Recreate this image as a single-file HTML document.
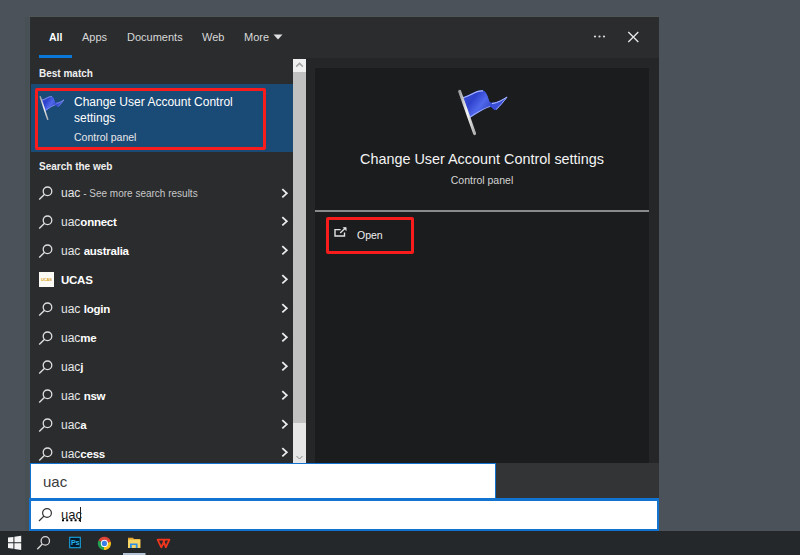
<!DOCTYPE html>
<html><head><meta charset="utf-8">
<style>
html,body{margin:0;padding:0;}
body{width:800px;height:555px;position:relative;overflow:hidden;background:#4b525a;font-family:"Liberation Sans",sans-serif;}
.a{position:absolute;}
#panel{left:30px;top:17px;width:629px;height:446px;background:#2a2c2e;}
#rcol{left:305px;top:58px;width:354px;height:405px;background:#242628;}
#rpane{left:315px;top:68px;width:334px;height:395px;background:#1b1c1e;}
.tab{top:31px;font-size:11px;color:#d8d8d8;white-space:nowrap;}
#uline{left:39px;top:55px;width:33px;height:3px;background:#0a78d8;}
.hdr{font-size:10px;font-weight:bold;color:#f0f0f0;white-space:nowrap;}
#hl{left:31px;top:84px;width:262px;height:68px;background:#1a4a76;}
.redbox{border:3px solid #f81c1c;box-sizing:border-box;border-radius:2px;}
.t{color:#fff;white-space:nowrap;}
.row{left:30px;width:263px;height:29px;}
.row .txt{position:absolute;left:31px;top:7px;font-size:13px;color:#e6e6e6;white-space:nowrap;}
.row .txt b{color:#fff;}
.row svg{position:absolute;}
#sb{left:293px;top:59px;width:13px;height:404px;background:#e6e6e6;}
#thumb{left:293px;top:72px;width:13px;height:351px;background:#c1c1c1;}
#tb{left:0;top:531px;width:800px;height:24px;background:#25282a;}
.row .ic{left:8px;top:8px;}
.row .chev{left:251px;top:9.5px;}
.row .txt{top:9px;font-size:12px;line-height:12px;}
.row .txt b{font-size:11.5px;letter-spacing:-0.25px;}
.sm{font-size:10px;color:#c8c8c8;}
.ucas{position:absolute;left:9px;top:7px;width:15px;height:15px;background:#fbfaf5;}
.ucas span{position:absolute;left:2px;top:5px;font-size:4px;line-height:5px;color:#d9a21c;font-weight:bold;letter-spacing:-0.1px;}
</style></head><body>
<div class="a" style="left:25px;top:17px;width:4px;height:514px;background:#475055;"></div>
<div class="a" style="left:29px;top:16px;width:630px;height:1px;background:#505557;"></div>
<div class="a" id="panel"></div>
<div class="a" id="rcol"></div>
<div class="a" id="rpane"></div>

<!-- tabs -->
<div class="a tab" style="left:49px;top:31px;font-weight:bold;font-size:10.5px;color:#fff;">All</div>
<div class="a tab" style="left:82px;">Apps</div>
<div class="a tab" style="left:127px;">Documents</div>
<div class="a tab" style="left:202px;">Web</div>
<div class="a tab" style="left:244px;">More</div>
<svg class="a" style="left:273px;top:34px" width="10" height="6"><path d="M0.5 0.5 H9.5 L5 5.5Z" fill="#e0e0e0"/></svg>
<div class="a" id="uline"></div>
<!-- dots and close -->
<svg class="a" style="left:590px;top:30px" width="60" height="16">
<circle cx="5" cy="6.5" r="1.1" fill="#ddd"/><circle cx="9.5" cy="6.5" r="1.1" fill="#ddd"/><circle cx="14" cy="6.5" r="1.1" fill="#ddd"/>
<path d="M38.3 2 L48.3 12 M48.3 2 L38.3 12" stroke="#e8e8e8" stroke-width="1.3"/>
</svg>

<div class="a hdr" style="left:39px;top:68px;">Best match</div>
<div class="a" id="hl"></div>
<div class="a redbox" style="left:35px;top:88px;width:231px;height:62px;"></div>
<div class="a t" style="left:74px;top:94px;font-size:12px;line-height:16px;">Change User Account Control<br>settings</div>
<div class="a t" style="left:74px;top:131px;font-size:10.5px;color:#e8e8e8;">Control panel</div>

<div class="a hdr" style="left:39px;top:161px;">Search the web</div>

<div class="a row" style="top:178px"><svg class="ic" width="16" height="16"><circle cx="9.5" cy="5.3" r="4.3" fill="none" stroke="#e0e0e0" stroke-width="1.3"/><path d="M6.6 8.3 L1.2 13.6" stroke="#e0e0e0" stroke-width="1.4"/></svg><div class="txt">uac<span class="sm"> - See more search results</span></div><svg class="chev" style="top:9.50px" width="8" height="11"><path d="M1.3 1.2 L5.8 5.3 L1.3 9.4" fill="none" stroke="#ececec" stroke-width="1.8"/></svg></div>
<div class="a row" style="top:207px"><svg class="ic" width="16" height="16"><circle cx="9.5" cy="5.3" r="4.3" fill="none" stroke="#e0e0e0" stroke-width="1.3"/><path d="M6.6 8.3 L1.2 13.6" stroke="#e0e0e0" stroke-width="1.4"/></svg><div class="txt">uac<b>onnect</b></div><svg class="chev" style="top:9.38px" width="8" height="11"><path d="M1.3 1.2 L5.8 5.3 L1.3 9.4" fill="none" stroke="#ececec" stroke-width="1.8"/></svg></div>
<div class="a row" style="top:236px"><svg class="ic" width="16" height="16"><circle cx="9.5" cy="5.3" r="4.3" fill="none" stroke="#e0e0e0" stroke-width="1.3"/><path d="M6.6 8.3 L1.2 13.6" stroke="#e0e0e0" stroke-width="1.4"/></svg><div class="txt">uac <b>australia</b></div><svg class="chev" style="top:9.26px" width="8" height="11"><path d="M1.3 1.2 L5.8 5.3 L1.3 9.4" fill="none" stroke="#ececec" stroke-width="1.8"/></svg></div>
<div class="a row" style="top:265px"><div class="ucas"><span>UCAS</span></div><div class="txt"><b>UCAS</b></div><svg class="chev" style="top:9.14px" width="8" height="11"><path d="M1.3 1.2 L5.8 5.3 L1.3 9.4" fill="none" stroke="#ececec" stroke-width="1.8"/></svg></div>
<div class="a row" style="top:294px"><svg class="ic" width="16" height="16"><circle cx="9.5" cy="5.3" r="4.3" fill="none" stroke="#e0e0e0" stroke-width="1.3"/><path d="M6.6 8.3 L1.2 13.6" stroke="#e0e0e0" stroke-width="1.4"/></svg><div class="txt">uac <b>login</b></div><svg class="chev" style="top:9.02px" width="8" height="11"><path d="M1.3 1.2 L5.8 5.3 L1.3 9.4" fill="none" stroke="#ececec" stroke-width="1.8"/></svg></div>
<div class="a row" style="top:323px"><svg class="ic" width="16" height="16"><circle cx="9.5" cy="5.3" r="4.3" fill="none" stroke="#e0e0e0" stroke-width="1.3"/><path d="M6.6 8.3 L1.2 13.6" stroke="#e0e0e0" stroke-width="1.4"/></svg><div class="txt">uac<b>me</b></div><svg class="chev" style="top:8.90px" width="8" height="11"><path d="M1.3 1.2 L5.8 5.3 L1.3 9.4" fill="none" stroke="#ececec" stroke-width="1.8"/></svg></div>
<div class="a row" style="top:352px"><svg class="ic" width="16" height="16"><circle cx="9.5" cy="5.3" r="4.3" fill="none" stroke="#e0e0e0" stroke-width="1.3"/><path d="M6.6 8.3 L1.2 13.6" stroke="#e0e0e0" stroke-width="1.4"/></svg><div class="txt">uac<b>j</b></div><svg class="chev" style="top:8.78px" width="8" height="11"><path d="M1.3 1.2 L5.8 5.3 L1.3 9.4" fill="none" stroke="#ececec" stroke-width="1.8"/></svg></div>
<div class="a row" style="top:381px"><svg class="ic" width="16" height="16"><circle cx="9.5" cy="5.3" r="4.3" fill="none" stroke="#e0e0e0" stroke-width="1.3"/><path d="M6.6 8.3 L1.2 13.6" stroke="#e0e0e0" stroke-width="1.4"/></svg><div class="txt">uac <b>nsw</b></div><svg class="chev" style="top:8.66px" width="8" height="11"><path d="M1.3 1.2 L5.8 5.3 L1.3 9.4" fill="none" stroke="#ececec" stroke-width="1.8"/></svg></div>
<div class="a row" style="top:410px"><svg class="ic" width="16" height="16"><circle cx="9.5" cy="5.3" r="4.3" fill="none" stroke="#e0e0e0" stroke-width="1.3"/><path d="M6.6 8.3 L1.2 13.6" stroke="#e0e0e0" stroke-width="1.4"/></svg><div class="txt">uac<b>a</b></div><svg class="chev" style="top:8.54px" width="8" height="11"><path d="M1.3 1.2 L5.8 5.3 L1.3 9.4" fill="none" stroke="#ececec" stroke-width="1.8"/></svg></div>
<div class="a row" style="top:439px"><svg class="ic" width="16" height="16"><circle cx="9.5" cy="5.3" r="4.3" fill="none" stroke="#e0e0e0" stroke-width="1.3"/><path d="M6.6 8.3 L1.2 13.6" stroke="#e0e0e0" stroke-width="1.4"/></svg><div class="txt">uac<b>cess</b></div><svg class="chev" style="top:8.42px" width="8" height="11"><path d="M1.3 1.2 L5.8 5.3 L1.3 9.4" fill="none" stroke="#ececec" stroke-width="1.8"/></svg></div>

<!-- right pane -->
<svg class="a" style="left:0;top:0" width="800" height="160">
<defs>
<linearGradient id="fg" x1="461" y1="92" x2="492" y2="116" gradientUnits="userSpaceOnUse"><stop offset="0" stop-color="#3c50d8"/><stop offset="0.35" stop-color="#2f42cc"/><stop offset="0.6" stop-color="#5068ec"/><stop offset="1" stop-color="#2434b4"/></linearGradient>
<linearGradient id="pg" x1="0" y1="0" x2="1" y2="0"><stop offset="0" stop-color="#a0a0a0"/><stop offset="0.5" stop-color="#f6f6f6"/><stop offset="1" stop-color="#b0b0b0"/></linearGradient>
<g id="flag">
<path d="M461 97.5 C468 97 476 89 483 90.5 C487 91.5 488 98 490 102.5 C495 103.5 502 100 507.5 96.5 C504 101 500 107 495 110.3 C493 109 491.5 107 490 106.6 C483 108 475 115 469 118.5 Z" fill="url(#fg)"/>
<path d="M490 102.5 C495 103.5 502 100 507.5 96.5 C504 101 500 107 495 110.3 C493 109 491.5 107 490 106.6 Z" fill="#3a4ed6"/>
<path d="M463 97.6 C470 96.5 476 90 483 91" fill="none" stroke="#a8b6ff" stroke-width="1.3"/>
<path d="M470 117 C477 113 484 108 490 106.5" fill="none" stroke="#98a8ff" stroke-width="1.2"/>
<path d="M492 103.6 C498 103 503 99.5 507 97" fill="none" stroke="#b4c2ff" stroke-width="1"/>
<path d="M496 109.6 C500 106 504 101 507 97.2" fill="none" stroke="#a0b0ff" stroke-width="1"/>
<path d="M459.6 91.3 L474.6 133.6" stroke="url(#pg)" stroke-width="3" stroke-linecap="round"/>
</g>
</defs>
<use href="#flag"/>
<use href="#flag" transform="translate(40.2 96.8) scale(0.5 0.53) translate(-459.6 -91.3)"/>
</svg>
<div class="a t" id="rtitle" style="left:315px;width:334px;text-align:center;top:151px;font-size:14.4px;line-height:16px;color:#f4f4f4;">Change User Account Control settings</div>
<div class="a t" id="rsub" style="left:315px;width:334px;text-align:center;top:174px;font-size:10.5px;line-height:12px;color:#d4d4d4;">Control panel</div>
<div class="a" style="left:315px;top:210px;width:334px;height:2px;background:#8a8a8a;"></div>
<div class="a redbox" style="left:326px;top:217px;width:88px;height:37px;"></div>
<svg class="a" style="left:330px;top:224px" width="20" height="16" viewBox="330 224 20 16"><path d="M340.6 229.6 H335 V236 H344.5 V232.6" fill="none" stroke="#e2e2e2" stroke-width="1.4"/><path d="M340.2 233 L345.6 227.8" stroke="#e2e2e2" stroke-width="1.3"/><path d="M343.2 227.6 H346.2 V230.6 Z" fill="#e2e2e2" stroke="#e2e2e2" stroke-width="0.6"/></svg>
<div class="a t" id="open" style="left:357px;top:229px;font-size:10.5px;line-height:12px;color:#f0f0f0;">Open</div>

<!-- search boxes -->
<div class="a" style="left:496px;top:463px;width:163px;height:35px;background:#333435;"></div>
<div class="a" style="left:30px;top:463px;width:466px;height:35px;background:#fff;box-sizing:border-box;border:1px solid #1273d0;border-bottom:none;"></div>
<div class="a" id="q1" style="left:43px;top:474px;font-size:15px;line-height:16px;color:#3c3c3c;">uac</div>
<div class="a" style="left:29px;top:498px;width:630px;height:33px;background:#fff;box-sizing:border-box;border:2px solid #1273d0;border-top-width:3px;"></div>
<svg class="a" style="left:38px;top:507px" width="16" height="16"><circle cx="9" cy="6" r="4.4" fill="none" stroke="#333" stroke-width="1.2"/><path d="M5.9 9.1 L1 14" stroke="#333" stroke-width="1.3"/></svg>
<div class="a" id="q2" style="left:61px;top:508px;font-size:13px;line-height:14px;color:#1a1a1a;">uac</div>
<svg class="a" style="left:61px;top:518px" width="20" height="4"><path d="M1 2.2 H19" stroke="#000" stroke-width="2" stroke-dasharray="2 2.2"/></svg>
<div class="a" style="left:80px;top:507px;width:1px;height:15px;background:#222;"></div>

<div class="a" id="sb"></div>
<div class="a" id="thumb"></div>
<div class="a" style="left:293px;top:59px;width:13px;height:13px;background:#f0f0f0;"></div><svg class="a" style="left:293px;top:59px" width="13" height="13"><path d="M3.2 7.6 L6.5 4.4 L9.8 7.6" fill="none" stroke="#a4a4a4" stroke-width="1.5"/></svg>
<svg class="a" style="left:293px;top:451px" width="13" height="12"><path d="M3.5 5 L6.5 8 L9.5 5" fill="none" stroke="#8a8a8a" stroke-width="1"/></svg>

<div class="a" id="tb"></div>
<!-- taskbar icons -->
<svg class="a" style="left:0;top:531px" width="200" height="24">
<path d="M8 6.6 L13.4 5.9 V11.3 H8 Z M14.4 5.7 L21.2 4.8 V11.3 H14.4 Z M8 12.3 H13.4 V17.8 L8 17.1 Z M14.4 12.3 H21.2 V19 L14.4 18.1 Z" fill="#f4f4f4"/>
<circle cx="45.3" cy="9.9" r="4.2" fill="none" stroke="#d8d8d8" stroke-width="1.3"/>
<path d="M42.3 12.9 L37.3 18.2" stroke="#d8d8d8" stroke-width="1.4"/>
<rect x="69.7" y="6.3" width="10.6" height="10.4" fill="#031a2c" stroke="#17a4e0" stroke-width="1.1"/>
<text x="70.9" y="14.3" font-family="Liberation Sans" font-size="7.2" font-weight="bold" fill="#25b4f0" letter-spacing="-0.3">Ps</text>
<path d="M104.4 12.4 L98.42 9.61 A6.6 6.6 0 0 1 110.78 10.69 Z" fill="#dd4436"/>
<path d="M104.4 12.4 L110.78 10.69 A6.6 6.6 0 0 1 103.82 18.97 Z" fill="#f6c11a"/>
<path d="M104.4 12.4 L103.82 18.97 A6.6 6.6 0 0 1 98.42 9.61 Z" fill="#20a050"/>
<circle cx="104.4" cy="12.4" r="3.6" fill="#f4f4f4"/>
<circle cx="104.4" cy="12.4" r="2.6" fill="#3b7de8"/>
<path d="M128 6.8 H133 L134 8 H140.3 V17 H128 Z" fill="#e3a530"/>
<path d="M128 8.6 H140.3 V17 H128 Z" fill="#f7d466"/>
<path d="M130 17 V12.4 H137.6 V17 H135.8 V14 H131.8 V17 Z" fill="#2d8ee8"/>
<rect x="123" y="22" width="22.5" height="2" fill="#b4c4d4"/>
<path d="M157.6 8.7 H164.8 L161.3 16.3 Z M163.2 8.7 H169.4 L165.8 16.3 Z" fill="none" stroke="#f2361e" stroke-width="1.8" stroke-linejoin="round"/>
</svg>

</body></html>
